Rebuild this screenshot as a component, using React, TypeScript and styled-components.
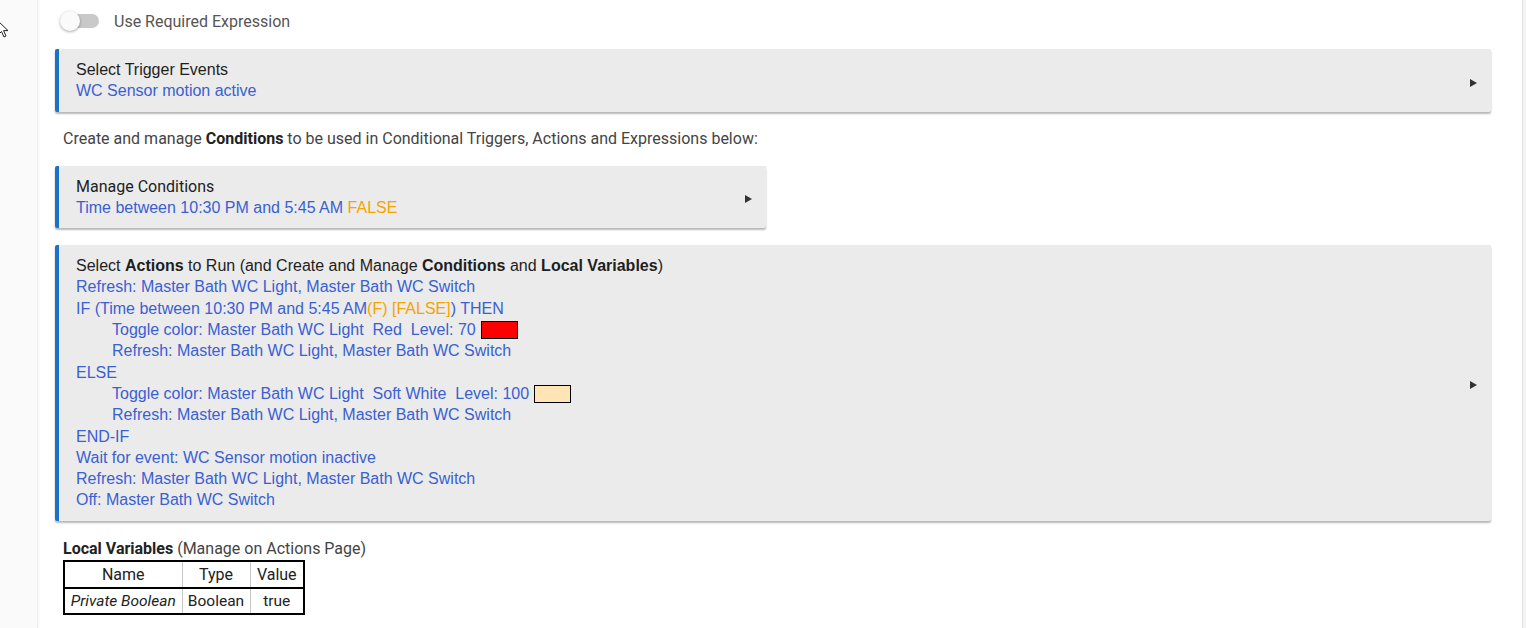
import styled, { createGlobalStyle } from "styled-components";

const GlobalStyle = createGlobalStyle`
  html, body {
    margin: 0;
    padding: 0;
    background: #fff;
    overflow: hidden;
  }
`;

const Page = styled.div`
  display: flex;
  width: 1526px;
  height: 628px;
  overflow: hidden;
`;

const SideRail = styled.div`
  position: relative;
  width: 37px;
  flex: none;
  background: #fafafa;
  border-right: 1px solid #ececec;
  box-shadow: 1px 0 2px rgba(0, 0, 0, 0.04);
`;

const Cursor = styled.svg`
  position: absolute;
  left: -4px;
  top: 20px;
`;

const Main = styled.div`
  flex: 1;
  display: flex;
  flex-direction: column;
  align-items: stretch;
  padding: 9px 31px 0 17px;
  background: #fff;
  font-family: Roboto, "Liberation Sans", sans-serif;
`;

const EdgeRail = styled.div`
  width: 3px;
  flex: none;
  background: #f4f4f4;
  border-left: 1px solid #e2e2e2;
`;

const ToggleRow = styled.div`
  display: flex;
  align-items: center;
  gap: 15px;
  height: 24px;
  padding-left: 7px;
  margin-bottom: 16px;
  color: #555;
  font-size: 16px;
`;

const Track = styled.div`
  position: relative;
  width: 36px;
  height: 14px;
  border-radius: 7px;
  background: #c9c9c9;
  margin-left: 1px;
`;

const Knob = styled.div`
  position: absolute;
  left: -3px;
  top: -3px;
  width: 20px;
  height: 20px;
  border-radius: 50%;
  background: #fafafa;
  box-shadow: 0 1px 3px rgba(0, 0, 0, 0.35);
`;

const Card = styled.div<{ $width?: string }>`
  display: flex;
  align-items: center;
  width: ${(p) => p.$width || "auto"};
  box-sizing: border-box;
  background: #ebebeb;
  border-left: 4px solid #1a73c8;
  border-radius: 2px;
  box-shadow: 0 2px 2px rgba(0, 0, 0, 0.28), 0 0 1px rgba(0, 0, 0, 0.08);
  padding: 10px 14px 10px 17px;
`;

const CardBody = styled.div`
  flex: 1;
  font-family: "Liberation Sans", Arial, sans-serif;
  font-size: 16px;
  line-height: 21.3px;
`;

const Title = styled.div<{ $roboto?: boolean }>`
  color: #1e1e1e;
  font-family: ${(p) =>
    p.$roboto ? "Roboto, sans-serif" : '"Liberation Sans", Arial, sans-serif'};
`;

const Line = styled.div<{ $indent?: boolean }>`
  display: flex;
  align-items: center;
  color: #3a5fd3;
  white-space: pre;
  padding-left: ${(p) => (p.$indent ? "36px" : "0")};
`;

const Warn = styled.span`
  color: #f5a300;
`;

const Swatch = styled.span<{ $color: string }>`
  display: inline-block;
  width: 35px;
  height: 16px;
  margin-left: 5px;
  background: ${(p) => p.$color};
  border: 1px solid #000;
`;

const Arrow = styled.div`
  width: 0;
  height: 0;
  margin-top: 5px;
  border-top: 4.5px solid transparent;
  border-bottom: 4.5px solid transparent;
  border-left: 7px solid #333;
`;

const Note = styled.div`
  color: #444;
  font-size: 16px;
  padding-left: 8px;
  margin: 17px 0 18px;
  b {
    color: #222;
  }
`;

const Spacer = styled.div<{ $h: number }>`
  height: ${(p) => p.$h}px;
  flex: none;
`;

const VarHeading = styled.div`
  color: #444;
  font-size: 16px;
  padding-left: 8px;
  margin: 18px 0 2px;
  b {
    color: #222;
  }
`;

const VarTable = styled.table`
  align-self: flex-start;
  margin-left: 8px;
  border-collapse: collapse;
  border: 2px solid #000;
  font-size: 15.5px;
  color: #222;
  th,
  td {
    border: 1px solid #c8c8c8;
    padding: 0;
    text-align: center;
    font-weight: 400;
  }
  th {
    height: 25px;
    font-size: 16px;
    border-bottom: 2px solid #000;
  }
  td {
    height: 24px;
  }
`;

const Col = styled.col<{ $w: number }>`
  width: ${(p) => p.$w}px;
`;

export default function App() {
  return (
    <>
      <GlobalStyle />
      <Page>
        <SideRail>
          <Cursor width="14" height="20" viewBox="0 0 14 20">
            <path
              d="M2 1 L2 15 L5.5 11.5 L8 17 L10 16 L7.6 10.6 L12 10.6 Z"
              fill="#fff"
              stroke="#222"
              strokeWidth="1"
            />
          </Cursor>
        </SideRail>
        <Main>
          <ToggleRow>
            <Track>
              <Knob />
            </Track>
            Use Required Expression
          </ToggleRow>

          <Card>
            <CardBody>
              <Title>Select Trigger Events</Title>
              <Line>WC Sensor motion active</Line>
            </CardBody>
            <Arrow />
          </Card>

          <Note>
            Create and manage <b>Conditions</b> to be used in Conditional Triggers, Actions and
            Expressions below:
          </Note>

          <Card $width="711px">
            <CardBody>
              <Title $roboto>Manage Conditions</Title>
              <Line>
                Time between 10:30 PM and 5:45 AM <Warn>FALSE</Warn>
              </Line>
            </CardBody>
            <Arrow />
          </Card>

          <Spacer $h={17} />

          <Card>
            <CardBody>
              <Title>
                Select <b>Actions</b> to Run (and Create and Manage <b>Conditions</b> and{" "}
                <b>Local Variables</b>)
              </Title>
              <Line>Refresh: Master Bath WC Light, Master Bath WC Switch</Line>
              <Line>
                IF (Time between 10:30 PM and 5:45 AM<Warn>(F) [FALSE]</Warn>) THEN
              </Line>
              <Line $indent>
                Toggle color: Master Bath WC Light  Red  Level: 70
                <Swatch $color="#ff0000" />
              </Line>
              <Line $indent>Refresh: Master Bath WC Light, Master Bath WC Switch</Line>
              <Line>ELSE</Line>
              <Line $indent>
                Toggle color: Master Bath WC Light  Soft White  Level: 100
                <Swatch $color="#ffe4b5" />
              </Line>
              <Line $indent>Refresh: Master Bath WC Light, Master Bath WC Switch</Line>
              <Line>END-IF</Line>
              <Line>Wait for event: WC Sensor motion inactive</Line>
              <Line>Refresh: Master Bath WC Light, Master Bath WC Switch</Line>
              <Line>Off: Master Bath WC Switch</Line>
            </CardBody>
            <Arrow />
          </Card>

          <VarHeading>
            <b>Local Variables</b> (Manage on Actions Page)
          </VarHeading>
          <VarTable>
            <colgroup>
              <Col $w={118} />
              <Col $w={68} />
              <Col $w={54} />
            </colgroup>
            <thead>
              <tr>
                <th>Name</th>
                <th>Type</th>
                <th>Value</th>
              </tr>
            </thead>
            <tbody>
              <tr>
                <td>
                  <i>Private Boolean</i>
                </td>
                <td>Boolean</td>
                <td>true</td>
              </tr>
            </tbody>
          </VarTable>
        </Main>
        <EdgeRail />
      </Page>
    </>
  );
}
